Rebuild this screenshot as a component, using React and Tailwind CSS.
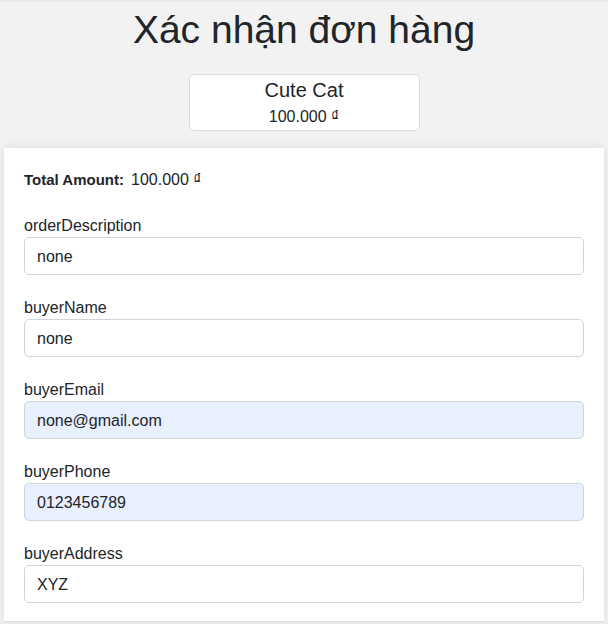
export default function App() {
  const fields = [
    { label: "orderDescription", value: "none", autofill: false },
    { label: "buyerName", value: "none", autofill: false },
    { label: "buyerEmail", value: "none@gmail.com", autofill: true },
    { label: "buyerPhone", value: "0123456789", autofill: true },
    { label: "buyerAddress", value: "XYZ", autofill: false },
  ];
  return (
    <div
      className="min-h-screen bg-[#f2f2f2] border-t-2 border-[#e9e9e9] text-[#212529] overflow-hidden"
      style={{ fontFamily: '"Liberation Sans", Arial, sans-serif' }}
    >
      <h1 className="text-center text-[39px] leading-[48px] pt-[4px] m-0">Xác nhận đơn hàng</h1>
      <div className="flex justify-center mt-[20px]">
        <div className="w-[231px] h-[57px] bg-white border border-[#dcdcdc] rounded-[5px] flex flex-col items-center pt-[3px]">
          <div className="text-[20px] leading-[24px]">Cute Cat</div>
          <div className="text-[16px] leading-[20px] mt-[5px]">100.000 ₫</div>
        </div>
      </div>
      <div className="mx-1 mt-[17px] bg-white shadow-[0_0_10px_rgba(0,0,0,0.09)] px-5 pt-5 pb-[18px] border-b border-[#dedede]">
        <div className="text-[16px] leading-[24px] mb-[21px]">
          <span className="font-bold text-[15px]">Total Amount:</span>
          <span className="ml-[7px]">100.000 ₫</span>
        </div>
        {fields.map((f, i) => (
          <div key={f.label} className={i < fields.length - 1 ? "mb-5" : ""}>
            <div className="text-[16px] leading-[24px] pt-[1px] -mb-[1px]">{f.label}</div>
            <div
              className={
                "h-[38px] rounded-[5px] border border-[#ced4da] px-3 flex items-center text-[16px] pt-[1px] " +
                (f.autofill ? "bg-[#e8f0fe]" : "bg-white")
              }
            >
              {f.value}
            </div>
          </div>
        ))}
      </div>
    </div>
  );
}
